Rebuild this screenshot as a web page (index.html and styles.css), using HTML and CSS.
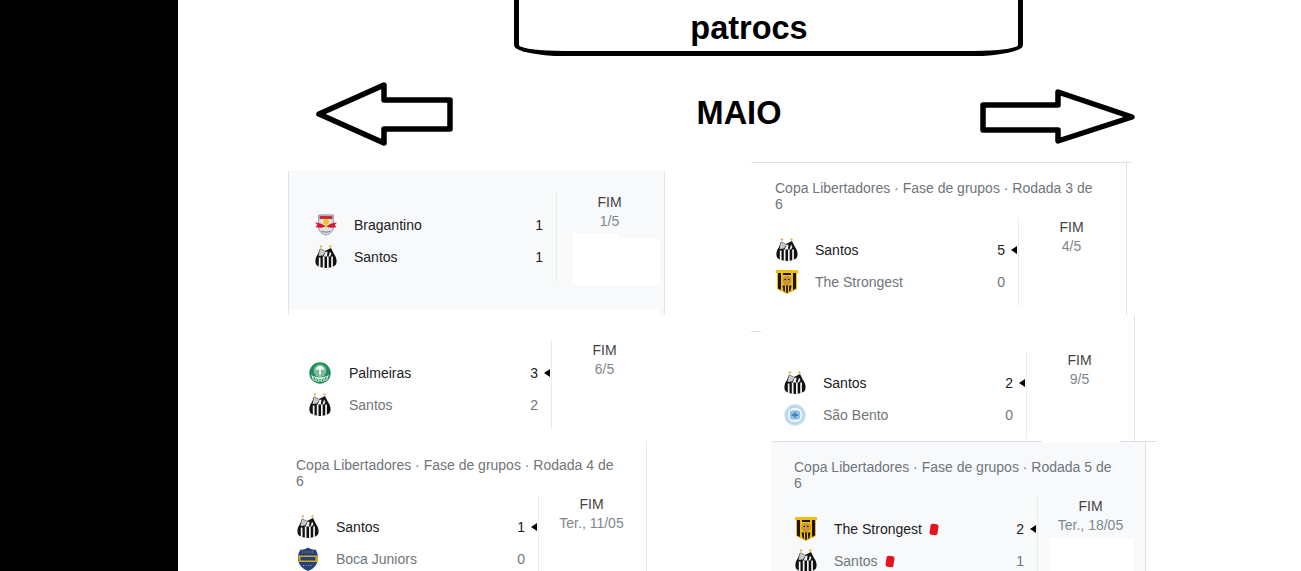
FILE: index.html
```html
<!DOCTYPE html>
<html lang="pt">
<head>
<meta charset="utf-8">
<title>patrocs</title>
<link rel="stylesheet" href="styles.css">
</head>
<body>
<svg class="defs" width="0" height="0" aria-hidden="true">
  <symbol id="santos" viewBox="0 0 22 24">
    <circle cx="6" cy="1.400" r="1.200" fill="#e3b84a"/><circle cx="15.500" cy="1.400" r="1.200" fill="#e3b84a"/>
    <path d="M5 3.500 10 6 16 3 19 9C22 13 22.500 18 20 20.500 16 23.800 6 23.800 2 20.500 -.5 18 0 13 3 9Z" fill="#111"/>
    <path d="M5 4 10.500 6.500 8 10.500 3.500 11Z" fill="#c9c9c9"/>
    <path d="M10.500 7 12.500 6.500 12 11.500H8.500Z" fill="#f2f2f2"/>
    <path d="M15 6.500 16.500 9 15 11.500H13.500Z" fill="#e8e8e8"/>
    <path d="M3.800 12.500H5.500V22.500H3.800ZM7.800 11.500H9.500V23.300H7.800ZM12 11.500H13.700V23.300H12ZM16.200 11.500H17.900V22.500H16.200Z" fill="#f4f4f4"/>
  </symbol>
  <symbol id="bragantino" viewBox="0 0 24 24">
    <path d="M4 1H20V15C20 19 16 22 12 23 8 22 4 19 4 15Z" fill="#dfe1e6" stroke="#8b8e96" stroke-width="1"/>
    <rect x="5" y="2" width="14" height="3.500" fill="#c92a3e"/>
    <circle cx="12" cy="8.500" r="3" fill="#f4c21c"/>
    <path d="M0 9 7 10.500 10 12.500H14L17 10.500 24 9 21.500 12 23.500 14.500 17 15 12 13.500 7 15 .5 14.500 2.500 12Z" fill="#d7172f"/>
    <circle cx="12" cy="13" r="1.600" fill="#f4c21c"/>
    <path d="M7 18.500C10 20 14 20 17 18.500" fill="none" stroke="#8b8e96" stroke-width="1.400"/>
  </symbol>
  <symbol id="strongest" viewBox="0 0 22 24">
    <path d="M0 0H22V3H21V19L11 24 1 19V3H0Z" fill="#f1bd11"/>
    <path d="M2 3H5V20L2 18.500ZM17 3H20V18.500L17 20ZM7 3H15V5H7Z" fill="#1b1608"/>
    <circle cx="11" cy="10.500" r="4.600" fill="#c9923a"/>
    <path d="M8.500 9.500H10M12 9.500H13.500" stroke="#1b1608"/>
    <path d="M6.500 15.500H15.500L14.500 21 11 23 7.500 21Z" fill="#1b1608"/>
    <path d="M9.500 15.500V22.500M12.500 15.500V22.500" stroke="#f1bd11" stroke-width="1.200"/>
  </symbol>
  <symbol id="palmeiras" viewBox="0 0 24 24">
    <circle cx="12" cy="12" r="11.700" fill="#1f8a5b"/>
    <circle cx="12" cy="9.500" r="7" fill="#79bd9c"/>
    <path d="M12 4C9.500 4.500 7.500 6.500 7 9 9 8 10 8 11.200 9L10.800 13.500H13.200L12.800 9C14 8 15 8 17 9 16.500 6.500 14.500 4.500 12 4Z" fill="#f4faf7"/>
    <path d="M2.200 13.500C6 17.500 18 17.500 21.800 13.500L20 19C17 22.500 7 22.500 4 19Z" fill="#cfe8da"/>
    <path d="M5 16.500 7 20M8.500 18 9.500 21M12 18.500V21.500M15.500 18 14.500 21M19 16.500 17 20" stroke="#1f8a5b" stroke-width="1.100"/>
  </symbol>
  <symbol id="saobento" viewBox="0 0 24 24">
    <circle cx="12" cy="12" r="11.700" fill="#c5deef"/>
    <circle cx="12" cy="12" r="8.800" fill="#eaf4fa" stroke="#8fbde0" stroke-width=".8"/>
    <rect x="6.500" y="7" width="11" height="10" rx="3" fill="#8fbfe2"/>
    <path d="M8.500 12H15.500M12 9V15" stroke="#2f78b5" stroke-width="1.500"/>
  </symbol>
  <symbol id="boca" viewBox="0 0 22 24">
    <path d="M3.500 2.500C6 3 9 2 11 .5 13 2 16 3 18.500 2.500 21.500 7 22 13 19 18 17 21 14 23 11 24 8 23 5 21 3 18 0 13 .5 7 3.500 2.500Z" fill="#23427c"/>
    <path d="M1 8.500H21V15H2Z" fill="#d9a520"/>
    <path d="M3.500 10H18.500V13.500H3.500Z" fill="#23427c"/>
    <path d="M5 5H17M6 18.500H16" stroke="#d9a520" stroke-dasharray="1 1.500"/>
  </symbol>
</svg>

<aside class="rail"></aside>
<main class="stage">
  <div class="banner">patrocs</div>
  <div class="month-nav">
    <svg class="arrow" width="145" height="70" viewBox="0 0 145 70" aria-hidden="true">
      <path d="M6 34 71 5V20H137V49H71V63Z"/>
    </svg>
    <h1 class="month">MAIO</h1>
    <svg class="arrow" width="160" height="70" viewBox="0 0 160 70" aria-hidden="true">
      <path d="M5 25H80V12L154 37 80 61V50H5Z"/>
    </svg>
  </div>

  <article class="match match-a">
    <div class="match-body">
      <div class="teams">
        <div class="team win"><svg class="logo"><use href="#bragantino"/></svg><span class="name">Bragantino</span><span class="score">1</span></div>
        <div class="team win"><svg class="logo"><use href="#santos"/></svg><span class="name">Santos</span><span class="score">1</span></div>
      </div>
      <div class="status"><div class="state">FIM</div><div class="date">1/5</div></div>
    </div>
    <i class="patch patch-a1"></i><i class="patch patch-a2"></i>
  </article>

  <article class="match match-b">
    <div class="league">Copa Libertadores · Fase de grupos · Rodada 3 de 6</div>
    <div class="match-body">
      <div class="teams">
        <div class="team win winner"><svg class="logo"><use href="#santos"/></svg><span class="name">Santos</span><span class="score">5</span></div>
        <div class="team"><svg class="logo"><use href="#strongest"/></svg><span class="name">The Strongest</span><span class="score">0</span></div>
      </div>
      <div class="status"><div class="state">FIM</div><div class="date">4/5</div></div>
    </div>
  </article>

  <article class="match match-c">
    <div class="match-body">
      <div class="teams">
        <div class="team win winner"><svg class="logo"><use href="#palmeiras"/></svg><span class="name">Palmeiras</span><span class="score">3</span></div>
        <div class="team"><svg class="logo"><use href="#santos"/></svg><span class="name">Santos</span><span class="score">2</span></div>
      </div>
      <div class="status"><div class="state">FIM</div><div class="date">6/5</div></div>
    </div>
  </article>

  <article class="match match-d">
    <div class="match-body">
      <div class="teams">
        <div class="team win winner"><svg class="logo"><use href="#santos"/></svg><span class="name">Santos</span><span class="score">2</span></div>
        <div class="team"><svg class="logo"><use href="#saobento"/></svg><span class="name">São Bento</span><span class="score">0</span></div>
      </div>
      <div class="status"><div class="state">FIM</div><div class="date">9/5</div></div>
    </div>
  </article>

  <article class="match match-e">
    <div class="league">Copa Libertadores · Fase de grupos · Rodada 4 de 6</div>
    <div class="match-body">
      <div class="teams">
        <div class="team win winner"><svg class="logo"><use href="#santos"/></svg><span class="name">Santos</span><span class="score">1</span></div>
        <div class="team"><svg class="logo"><use href="#boca"/></svg><span class="name">Boca Juniors</span><span class="score">0</span></div>
      </div>
      <div class="status"><div class="state">FIM</div><div class="date">Ter., 11/05</div></div>
    </div>
  </article>

  <article class="match match-f">
    <div class="league">Copa Libertadores · Fase de grupos · Rodada 5 de 6</div>
    <div class="match-body">
      <div class="teams">
        <div class="team win winner"><svg class="logo"><use href="#strongest"/></svg><span class="name">The Strongest</span><i class="red-card"></i><span class="score">2</span></div>
        <div class="team"><svg class="logo"><use href="#santos"/></svg><span class="name">Santos</span><i class="red-card"></i><span class="score">1</span></div>
      </div>
      <div class="status"><div class="state">FIM</div><div class="date">Ter., 18/05</div></div>
    </div>
    <i class="patch patch-f1"></i><i class="patch patch-f2"></i>
  </article>
</main>
</body>
</html>
```
FILE: styles.css
```css
* { box-sizing: border-box; }
html, body { height: 100%; }
body {
  margin: 0;
  display: flex;
  overflow: hidden;
  background: #fff;
  font-family: "Liberation Sans", Arial, sans-serif;
  color: #000;
}
.defs { position: absolute; }
.rail { flex: 0 0 178px; background: #000; }
.stage { position: relative; flex: 1; height: 571px; overflow: hidden; }

.banner {
  width: 509px;
  height: 56px;
  margin-left: 336px;
  padding-right: 39px;
  border: 5px solid #000;
  border-top: 0;
  border-radius: 0 0 50px 50px / 0 0 11px 11px;
  font-size: 32.5px;
  font-weight: 700;
  line-height: 56px;
  text-align: center;
}
.month-nav {
  display: flex;
  align-items: center;
  height: 70px;
  margin: 24px 0 0 135px;
}
.month {
  width: 520px;
  margin: 0 0 4px;
  padding-left: 42px;
  font-size: 32.5px;
  font-weight: 700;
  line-height: 37px;
  text-align: center;
}
.arrow { flex: none; }
.arrow path { fill: #fff; stroke: #000; stroke-width: 5.5; stroke-linejoin: round; }

/* the match cards are pasted on a free canvas, so each has its own place */
.match {
  position: absolute;
  padding-left: 24px;
  font-size: 14px;
}
.league {
  width: 326px;
  height: 32px;
  margin-bottom: 6px;
  color: #70757a;
  line-height: 16px;
}
.match-body { display: flex; height: 88px; }
.teams { width: 243px; padding-top: 16px; }
.team { position: relative; display: flex; align-items: center; height: 32px; padding-left: 1px; color: #70757a; }
.team.win { color: #202124; }
.logo { flex: none; width: 22px; height: 24px; margin-right: 17px; }
.name { line-height: 16px; }
.score { position: absolute; right: 13px; line-height: 16px; }
.winner::after {
  content: "";
  position: absolute;
  right: 1px;
  border-style: solid;
  border-width: 4px 6px 4px 0;
  border-color: transparent #000 transparent transparent;
}
.red-card {
  width: 8px;
  height: 11px;
  margin-left: 8px;
  border-radius: 2px;
  background: #e5131d;
  transform: rotate(8deg);
}
.status {
  flex: none;
  width: 108px;
  padding-right: 2px;
  border-left: 1px solid #ebebeb;
  line-height: 19px;
  text-align: center;
}
.state { color: #444; }
.date { color: #80868b; }

.patch { position: absolute; background: #fff; }

.match-a {
  left: 110px; top: 171px; width: 377px; height: 144px;
  padding: 22px 0 0 25px;
  border: solid #e3e4e6;
  border-width: 0 1px;
  background: #f8f9fa;
}
.match-a .teams { width: 244px; }
.patch-a1 { left: 284px; top: 62px; width: 87px; height: 52px; clip-path: polygon(0 0, 53% 0, 53% 12%, 100% 12%, 100% 100%, 0 100%); }
.patch-a2 { left: 0; top: 138px; width: 369px; height: 6px; }

.match-b {
  left: 573px; top: 162px; width: 376px; height: 153px;
  padding-top: 18px;
  border-right: 1px solid #dfe1e5;
}
.match-b::before {
  content: "";
  position: absolute;
  left: 0; top: 0;
  width: 380px; height: 1px;
  background: #dfe1e5;
}
.match-b::after {
  content: "";
  position: absolute;
  left: 0; bottom: -17px;
  width: 10px; height: 1px;
  background: #dfe1e5;
}
.match-c { left: 106px; top: 341px; width: 380px; }
.match-c .logo { margin-right: 18px; }
.match-d {
  left: 582px; top: 316px; width: 375px; height: 125px;
  padding: 35px 0 0 23px;
  border-right: 1px solid #dfe1e5;
}
.match-d .teams { width: 244px; }
.match-e {
  left: 94px; top: 441px; width: 375px; height: 130px;
  padding-top: 16px;
  border-right: 1px solid #ebebeb;
}
.match-f {
  left: 593px; top: 441px; width: 375px; height: 130px;
  padding: 17px 0 0 23px;
  border-top: 1px solid #dfe1e5;
  border-right: 1px solid #dfe1e5;
  background: #f8f9fa;
}
.patch-f1 { left: 278px; top: 96px; width: 84px; height: 40px; }
.patch-f2 { left: 271px; top: -1px; width: 78px; height: 2px; }
.match-f::after {
  content: "";
  position: absolute;
  left: 374px; top: -1px;
  width: 12px; height: 1px;
  background: #dfe1e5;
}
```
